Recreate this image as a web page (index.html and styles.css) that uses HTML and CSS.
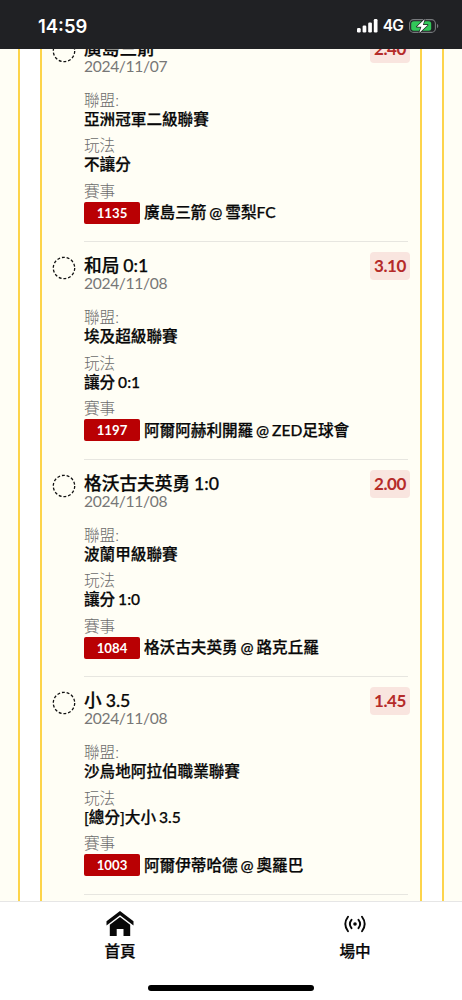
FILE: index.html
```
<!DOCTYPE html>
<html lang="zh-Hant">
<head>
<meta charset="utf-8">
<title>賽事</title>
<link rel="stylesheet" href="styles.css">
</head>
<body>
<div class="screen">
  <header class="status">
    <span class="time">14:59</span>
    <span class="indicators">
      <svg class="signal" width="21" height="14" viewBox="0 0 21 14" fill="#fff"><rect x="0" y="9" width="3.7" height="4.5" rx="1.2"/><rect x="5.6" y="6.6" width="3.7" height="6.9" rx="1.2"/><rect x="11.2" y="3.5" width="3.7" height="10" rx="1.2"/><rect x="16.8" y="0" width="3.7" height="13.5" rx="1.2"/></svg>
      <span class="network">4G</span>
      <svg class="battery" width="30" height="16" viewBox="0 0 30 16"><rect x=".6" y="1.6" width="25.8" height="12.8" rx="4" fill="none" stroke="#777a7d" stroke-width="1.1"/><rect x="2.2" y="3.2" width="20" height="9.6" rx="2.5" fill="#32c759"/><path d="M28 5.8Q29.3 6.5 29.3 8T28 10.2Z" fill="#777a7d"/><path d="M15.8 1 7.8 8.8h4.6L10.2 15 18.7 6.9h-4.8Z" fill="#fff" stroke="#202124" stroke-width="1.4" paint-order="stroke" stroke-linejoin="round"/></svg>
    </span>
  </header>
  <main class="viewport">
    <div class="outer">
      <div class="panel">
        <section class="bet">
          <svg class="ring" width="24" height="24" viewBox="0 0 24 24"><circle cx="12" cy="12" r="10.7"/></svg>
          <div class="info">
            <h2>廣島三箭</h2><span class="odds">2.40</span>
            <p class="date">2024/11/07</p>
            <dl><dt>聯盟:</dt><dd>亞洲冠軍二級聯賽</dd><dt>玩法</dt><dd>不讓分</dd><dt>賽事</dt><dd class="match"><span class="code">1135</span>廣島三箭 @ 雪梨FC</dd></dl>
          </div>
        </section>
        <section class="bet">
          <svg class="ring" width="24" height="24" viewBox="0 0 24 24"><circle cx="12" cy="12" r="10.7"/></svg>
          <div class="info">
            <h2>和局 0:1</h2><span class="odds">3.10</span>
            <p class="date">2024/11/08</p>
            <dl><dt>聯盟:</dt><dd>埃及超級聯賽</dd><dt>玩法</dt><dd>讓分 0:1</dd><dt>賽事</dt><dd class="match"><span class="code">1197</span>阿爾阿赫利開羅 @ ZED足球會</dd></dl>
          </div>
        </section>
        <section class="bet">
          <svg class="ring" width="24" height="24" viewBox="0 0 24 24"><circle cx="12" cy="12" r="10.7"/></svg>
          <div class="info">
            <h2>格沃古夫英勇 1:0</h2><span class="odds">2.00</span>
            <p class="date">2024/11/08</p>
            <dl><dt>聯盟:</dt><dd>波蘭甲級聯賽</dd><dt>玩法</dt><dd>讓分 1:0</dd><dt>賽事</dt><dd class="match"><span class="code">1084</span>格沃古夫英勇 @ 路克丘羅</dd></dl>
          </div>
        </section>
        <section class="bet">
          <svg class="ring" width="24" height="24" viewBox="0 0 24 24"><circle cx="12" cy="12" r="10.7"/></svg>
          <div class="info">
            <h2>小 3.5</h2><span class="odds">1.45</span>
            <p class="date">2024/11/08</p>
            <dl><dt>聯盟:</dt><dd>沙烏地阿拉伯職業聯賽</dd><dt>玩法</dt><dd>[總分]大小 3.5</dd><dt>賽事</dt><dd class="match"><span class="code">1003</span>阿爾伊蒂哈德 @ 奧羅巴</dd></dl>
          </div>
        </section>
      </div>
    </div>
  </main>
  <nav class="tabs">
    <a class="tab"><svg width="28" height="26" viewBox="0 0 28 26"><path d="M14 0 27.5 10.2V14.4L14 4.2.5 14.4V10.2Z"/><path d="M14 6.1 24.2 13.7V25H17.5V18H10.7V25H3.8V13.7Z"/></svg><span>首頁</span></a>
    <a class="tab live"><svg width="22" height="26" viewBox="0 0 22 26"><circle cx="11" cy="13" r="1.8"/><path class="wave" d="M4 5.8Q-1.4 13 4 20.2M7.5 8.8Q4.2 13 7.5 17.2M14.5 8.8Q17.8 13 14.5 17.2M18 5.8Q23.4 13 18 20.2"/></svg><span>場中</span></a>
    <div class="home-bar"></div>
  </nav>
</div>
</body>
</html>
```
FILE: styles.css
```
* { box-sizing: border-box; }
body, h2, p, dl, dd { margin: 0; }
body {
  font-family: Lato, "Noto Sans CJK TC", sans-serif;
  font-size: 15.6px;
  color: #080808;
}
.screen { height: 1000px; display: flex; flex-direction: column; overflow: hidden; }
.status {
  height: 49px;
  flex: none;
  display: flex;
  justify-content: space-between;
  align-items: center;
  padding: 2px 23px 0 38px;
  background: #202124;
  color: #fff;
  font-family: Inter, sans-serif;
}
.time { font-size: 18.4px; font-weight: 600; }
.indicators { display: flex; align-items: center; }
.network { font-size: 15.5px; font-weight: 600; letter-spacing: -.8px; margin: 0 6px 0 5px; }
.viewport {
  height: 852px;
  flex: none;
  overflow: hidden;
  padding: 0 18px;
  background: #fffef5;
}
.outer {
  height: 100%;
  padding: 0 20px;
  background: #fff;
  border: solid #fdd44b;
  border-width: 0 2px;
}
.panel {
  height: 100%;
  overflow: hidden;
  padding: 0 12px 0 10px;
  background: #fffef5;
  border: solid #fdd44b;
  border-width: 0 2px;
}
.bet { display: flex; gap: 8px; height: 217.5px; }
.bet:first-child { margin-top: -24.5px; }
.ring { flex: none; margin: 14px .5px 0 -.5px; }
.ring circle { fill: none; stroke: #111; stroke-width: 1.3; stroke-dasharray: 2.9 1.9; }
.info {
  flex: 1;
  display: grid;
  grid-template-columns: 1fr auto;
  grid-template-rows: 21px 17px 1fr;
  padding-top: 13px;
  border-bottom: 1px solid #e7e6e0;
}
h2, dd, .tab { font-weight: 500; -webkit-text-stroke: .25px currentColor; }
h2 { font-size: 17.7px; line-height: 21px; word-spacing: -.5px; white-space: nowrap; }
.odds {
  width: 40px;
  height: 28px;
  margin: -3px -2px 0 0;
  border-radius: 4px;
  background: #f9e5df;
  color: #b52b29;
  font-size: 17px;
  font-weight: 700;
  letter-spacing: -.4px;
  line-height: 28px;
  text-align: center;
}
.date { grid-column: 1; line-height: 15px; color: #777; letter-spacing: -.33px; }
dl { grid-column: 1 / -1; padding-top: 15px; }
dt { height: 19px; line-height: 19px; color: #6c6c6c; font-weight: 300; }
dd { height: 19px; line-height: 19px; margin-bottom: 7.5px; word-spacing: -1px; white-space: nowrap; }
.match { display: flex; align-items: center; gap: 4px; height: 22px; margin: 1px 0 0; }
.code {
  width: 56px;
  height: 22px;
  border-radius: 2px;
  background: #b90003;
  color: #fff;
  font-size: 13.2px;
  font-weight: 700;
  -webkit-text-stroke: 0;
  line-height: 22px;
  text-align: center;
}
.tabs {
  flex: 1;
  position: relative;
  display: flex;
  justify-content: space-between;
  padding: 9px 83px 0 96px;
  background: #fff;
  border-top: 1px solid #e6e6e6;
}
.tab { width: 48px; display: flex; flex-direction: column; align-items: center; line-height: 20px; gap: 4px; }
.tab svg { fill: #080808; }
.live .wave { fill: none; stroke: #080808; stroke-width: 1.9; stroke-linecap: round; }
.home-bar {
  position: absolute;
  left: 148px;
  bottom: 9px;
  width: 166px;
  height: 6px;
  border-radius: 3px;
  background: #000;
}
```
